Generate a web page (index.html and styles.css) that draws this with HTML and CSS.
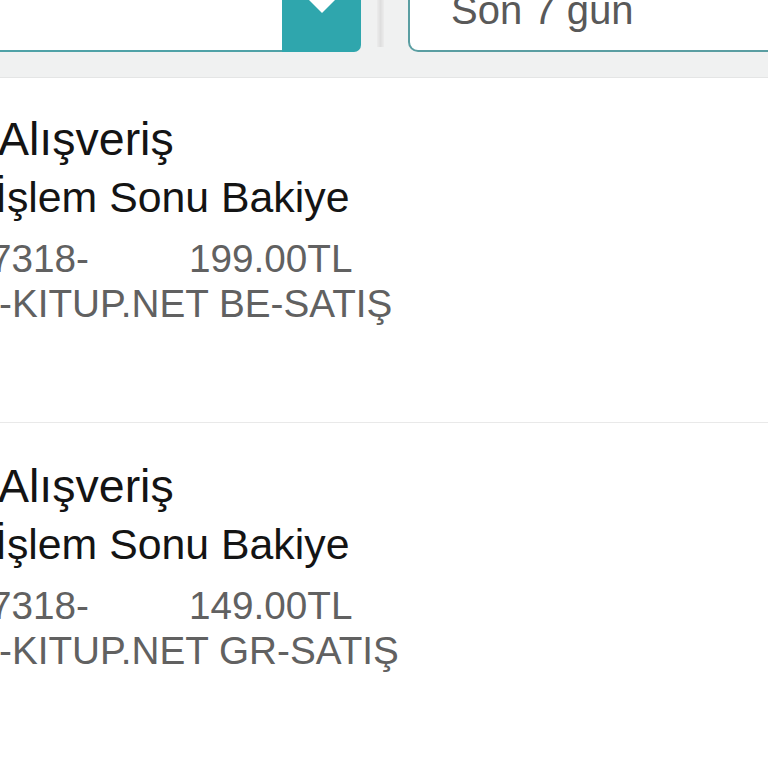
FILE: index.html
```html
<!DOCTYPE html>
<html lang="tr">
<head>
<meta charset="utf-8">
<link rel="stylesheet" href="styles.css">
</head>
<body>
<div class="page">
  <div class="filters">
    <div class="select">
      <div class="select-field"></div>
      <div class="select-btn">
        <svg class="chev" width="26" height="13" viewBox="0 0 26 13"><path d="M0 0H26L13 13Z" fill="#fff"/></svg>
      </div>
    </div>
    <div class="divider"></div>
    <div class="period"><span class="period-text">Son 7 gün</span></div>
  </div>
  <div class="list">
    <div class="tx">
      <div class="tx-type">Alışveriş</div>
      <div class="tx-label">İşlem Sonu Bakiye</div>
      <div class="tx-meta">
        <div class="tx-line"><span class="tx-ref">7318-</span><span class="tx-amt">199.00TL</span></div>
        <div class="tx-line tx-desc">-KITUP.NET BE-SATIŞ</div>
      </div>
    </div>
    <div class="tx">
      <div class="tx-type">Alışveriş</div>
      <div class="tx-label">İşlem Sonu Bakiye</div>
      <div class="tx-meta">
        <div class="tx-line"><span class="tx-ref">7318-</span><span class="tx-amt">149.00TL</span></div>
        <div class="tx-line tx-desc">-KITUP.NET GR-SATIŞ</div>
      </div>
    </div>
  </div>
</div>
</body>
</html>
```
FILE: styles.css
```css
html, body {
  margin: 0;
  padding: 0;
  background: #fff;
}
body {
  width: 768px;
  height: 768px;
  overflow: hidden;
  font-family: "Liberation Sans", Arial, sans-serif;
}
.page {
  width: 768px;
}
.filters {
  height: 77px;
  background: #f0f1f1;
  border-bottom: 1px solid #e4e5e5;
  display: flex;
  align-items: flex-start;
}
.select {
  display: flex;
  width: 361px;
  height: 52px;
}
.select-field {
  flex: 1;
  background: #fff;
  border-bottom: 2px solid #4fa2a7;
}
.select-btn {
  width: 79px;
  background: #2fa6ad;
  border-bottom-right-radius: 7px;
  display: flex;
  justify-content: center;
  align-items: flex-start;
}
.chev {
  display: block;
}
.divider {
  margin-left: 16px;
  width: 7px;
  height: 47px;
  background: linear-gradient(to right, #ececec, #dedede 50%, #ececec);
}
.period {
  margin-left: 24px;
  margin-right: -20px;
  flex: 1;
  background: #fff;
  border: 2px solid #5a9ea2;
  border-top: none;
  border-bottom-left-radius: 10px;
  display: flex;
  align-items: flex-end;
  padding-left: 41px;
  padding-bottom: 20px;
  box-sizing: content-box;
  height: 30px;
}
.period-text {
  font-size: 40px;
  line-height: 40px;
  color: #595959;
  white-space: nowrap;
}
.tx {
  border-bottom: 1px solid #e9e9e9;
  padding-top: 32px;
  box-sizing: border-box;
  height: 345px;
  white-space: nowrap;
}
.tx + .tx {
  padding-top: 34px;
  border-bottom: none;
}
.tx-type {
  font-size: 46.5px;
  line-height: 58px;
  color: #141414;
  margin-left: -2px;
}
.tx-label {
  font-size: 42.8px;
  line-height: 58px;
  color: #141414;
  margin-left: -5px;
}
.tx-meta {
  margin-top: 10px;
  color: #616161;
  font-size: 38.7px;
  line-height: 45px;
}
.tx-line {
  display: flex;
}
.tx-ref {
  width: 199px;
  margin-left: -10px;
}
.tx-desc {
  margin-left: -1px;
}
```
